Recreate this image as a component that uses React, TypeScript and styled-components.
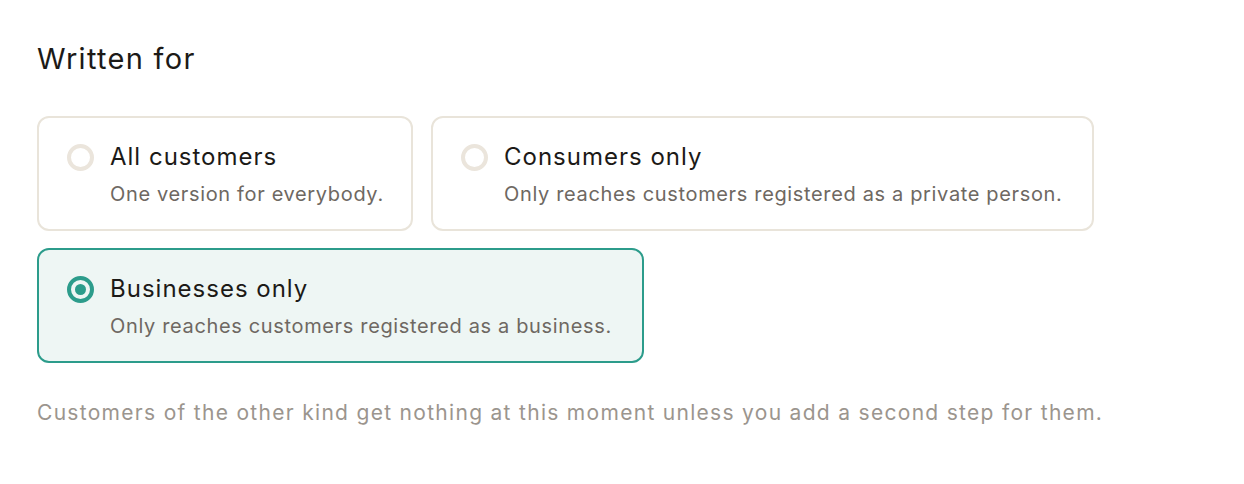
import { FC, useState } from "react";
import styled, { createGlobalStyle } from "styled-components";

const GlobalStyle = createGlobalStyle`
  body {
    margin: 0;
    background: #ffffff;
    font-family: "Inter", "Noto Sans", sans-serif;
    color: #1f1d1a;
  }
`;

const Page = styled.div`
  padding: 38px 37px;
`;

const Heading = styled.h2`
  margin: 0 0 36px;
  font-size: 29px;
  font-weight: 400;
  line-height: 42px;
  letter-spacing: 1.3px;
  color: #1c1a17;
`;

const Options = styled.div`
  display: flex;
  flex-wrap: wrap;
  gap: 17px 18px;
  max-width: 1060px;
`;

const Card = styled.label<{ $selected: boolean; $width: number }>`
  box-sizing: border-box;
  width: ${(p) => p.$width}px;
  height: 115px;
  display: flex;
  align-items: flex-start;
  gap: 16px;
  padding: 25px 20px 25px 28px;
  border-radius: 12px;
  border: 2px solid ${(p) => (p.$selected ? "#2c9c8b" : "#e9e4da")};
  background: ${(p) => (p.$selected ? "#eef6f4" : "#ffffff")};
  white-space: nowrap;
  cursor: pointer;
`;

const Radio = styled.span<{ $selected: boolean }>`
  box-sizing: border-box;
  flex: none;
  width: 27px;
  height: 27px;
  margin-top: 1px;
  border-radius: 50%;
  border: 4px solid ${(p) => (p.$selected ? "#2c9c8b" : "#ebe5dc")};
  display: flex;
  align-items: center;
  justify-content: center;

  &::after {
    content: "";
    width: 11px;
    height: 11px;
    border-radius: 50%;
    background: ${(p) => (p.$selected ? "#2c9c8b" : "transparent")};
  }
`;

const Texts = styled.div`
  display: flex;
  flex-direction: column;
  gap: 11px;
`;

const Title = styled.span`
  font-size: 24px;
  line-height: 28px;
  letter-spacing: 1px;
  color: #1c1a17;
`;

const Description = styled.span`
  font-size: 20px;
  line-height: 24px;
  letter-spacing: 0.65px;
  color: #6e6862;
`;

const Note = styled.p`
  margin: 38px 0 0;
  font-size: 21px;
  line-height: 24px;
  letter-spacing: 1.3px;
  color: #9b958e;
`;

const options = [
  { id: "all", title: "All customers", desc: "One version for everybody.", width: 376 },
  {
    id: "consumers",
    title: "Consumers only",
    desc: "Only reaches customers registered as a private person.",
    width: 663,
  },
  {
    id: "businesses",
    title: "Businesses only",
    desc: "Only reaches customers registered as a business.",
    width: 607,
  },
];

const App: FC = () => {
  const [selected, setSelected] = useState("businesses");
  return (
    <>
      <GlobalStyle />
      <Page>
        <Heading>Written for</Heading>
        <Options>
          {options.map((o) => (
            <Card
              key={o.id}
              $selected={selected === o.id}
              $width={o.width}
              onClick={() => setSelected(o.id)}
            >
              <Radio $selected={selected === o.id} />
              <Texts>
                <Title>{o.title}</Title>
                <Description>{o.desc}</Description>
              </Texts>
            </Card>
          ))}
        </Options>
        <Note>
          Customers of the other kind get nothing at this moment unless you add a second step for
          them.
        </Note>
      </Page>
    </>
  );
};

export default App;
